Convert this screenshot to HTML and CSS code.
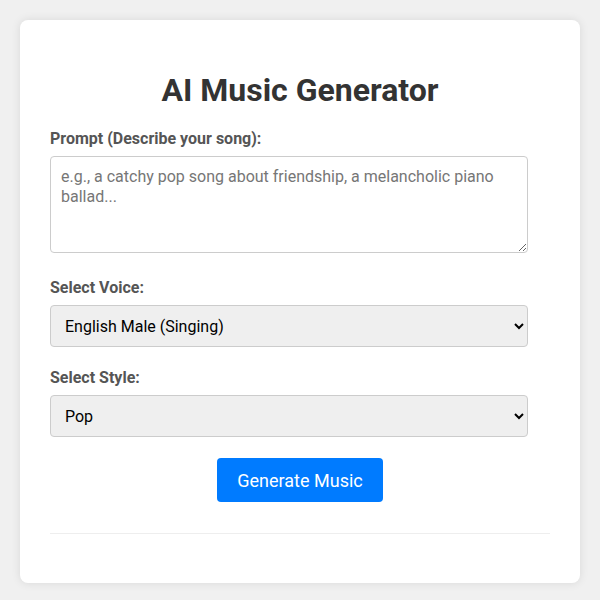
FILE: index.html
```html
<!DOCTYPE html>
<html lang="en">
<head>
<meta charset="utf-8">
<title>AI Music Generator</title>
<link rel="stylesheet" href="styles.css">
</head>
<body>
  <div class="card">
    <h1 class="title">AI Music Generator</h1>
    <div class="form-group form-group-text">
      <label class="label" for="prompt">Prompt (Describe your song):</label>
      <textarea id="prompt" class="field textarea" rows="4" placeholder="e.g., a catchy pop song about friendship, a melancholic piano ballad..."></textarea>
    </div>
    <div class="form-group">
      <label class="label" for="voice">Select Voice:</label>
      <select id="voice" class="field select">
        <option>English Male (Singing)</option>
        <option>English Female (Singing)</option>
      </select>
    </div>
    <div class="form-group">
      <label class="label" for="style">Select Style:</label>
      <select id="style" class="field select">
        <option>Pop</option>
        <option>Rock</option>
        <option>Jazz</option>
      </select>
    </div>
    <div class="actions">
      <button class="btn" type="button">Generate Music</button>
    </div>
    <div class="results"></div>
  </div>
</body>
</html>
```

FILE: styles.css
```css
html, body {
  margin: 0;
}
body {
  background: #f0f0f0;
  padding: 20px;
  font-family: Roboto, "Liberation Sans", sans-serif;
  color: #333;
}
.card {
  background: #fff;
  border-radius: 8px;
  box-shadow: 0 0 10px rgba(0, 0, 0, 0.1);
  padding: 30px;
}
.title {
  font-size: 32px;
  line-height: 38px;
  font-weight: 700;
  text-align: center;
  color: #333;
  margin: 21px 0 20px;
}
.form-group {
  margin-bottom: 21px;
}
.form-group-text {
  margin-bottom: 25px;
}
.label {
  display: block;
  font-size: 16px;
  line-height: 19px;
  font-weight: 700;
  color: #555;
  margin-bottom: 8px;
}
.field {
  display: block;
  box-sizing: border-box;
  width: calc(100% - 22px);
  padding: 10px;
  border: 1px solid #ccc;
  border-radius: 4px;
  font-family: Roboto, "Liberation Sans", sans-serif;
  font-size: 16px;
  color: #000;
}
.textarea {
  height: 97px;
  line-height: 20px;
  background: #fff;
}
.textarea::placeholder {
  color: #767676;
}
.select {
  height: 42px;
  padding: 0 10px;
  background-color: #efefef;
}
.actions {
  display: flex;
  justify-content: center;
}
.btn {
  background: #007bff;
  color: #fff;
  border: none;
  border-radius: 4px;
  padding: 0 20px;
  height: 44px;
  font-family: Roboto, "Liberation Sans", sans-serif;
  font-size: 18px;
}
.results {
  margin-top: 31px;
  border-top: 1px solid #eee;
  padding-top: 19px;
}
```
